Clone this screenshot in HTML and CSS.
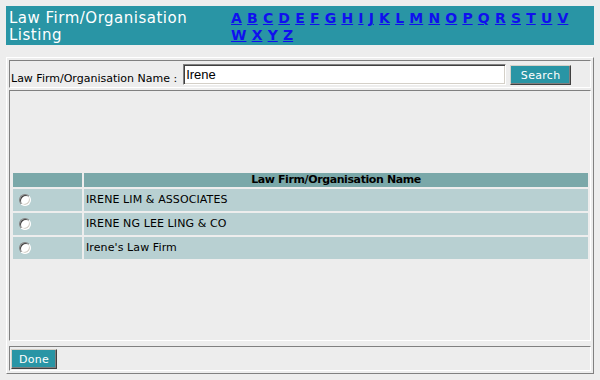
FILE: index.html
```html
<!DOCTYPE html>
<html>
<head>
<meta charset="utf-8">
<title>Law Firm/Organisation Listing</title>
<link rel="stylesheet" href="styles.css">
</head>
<body>
<div class="header">
  <div class="title">Law Firm/Organisation Listing</div>
  <div class="letters">
    <a href="#">A</a> <a href="#">B</a> <a href="#">C</a> <a href="#">D</a> <a href="#">E</a> <a href="#">F</a> <a href="#">G</a> <a href="#">H</a> <a href="#">I</a> <a href="#">J</a> <a href="#">K</a> <a href="#">L</a> <a href="#">M</a> <a href="#">N</a> <a href="#">O</a> <a href="#">P</a> <a href="#">Q</a> <a href="#">R</a> <a href="#">S</a> <a href="#">T</a> <a href="#">U</a> <a href="#">V</a><br><a href="#">W</a> <a href="#">X</a> <a href="#">Y</a> <a href="#">Z</a>
  </div>
</div>

<div class="frame">
  <div class="cell search-cell">
    <label class="label" for="name">Law Firm/Organisation Name :</label>
    <input class="text-input" id="name" type="text" value="Irene">
    <button class="btn search-btn" type="button">Search</button>
  </div>

  <div class="cell result-cell">
    <div class="grid">
      <div class="th"></div>
      <div class="th">Law Firm/Organisation Name</div>

      <div class="td radio-td"><input class="radio" type="radio" name="firm"></div>
      <div class="td">IRENE LIM &amp; ASSOCIATES</div>

      <div class="td radio-td"><input class="radio" type="radio" name="firm"></div>
      <div class="td">IRENE NG LEE LING &amp; CO</div>

      <div class="td radio-td"><input class="radio" type="radio" name="firm"></div>
      <div class="td">Irene's Law Firm</div>
    </div>
  </div>

  <div class="cell footer-cell">
    <button class="btn done-btn" type="button">Done</button>
  </div>
</div>
</body>
</html>
```

FILE: styles.css
```css
html, body {
  margin: 0;
  padding: 0;
}
body {
  background: #ededed;
  margin: 6px;
  font-family: "DejaVu Sans", Verdana, sans-serif;
  font-size: 11px;
  color: #000;
}

.header {
  display: flex;
  background: #2995a5;
  height: 39px;
  box-sizing: border-box;
  padding: 4px 0 1px 0;
}
.title {
  width: 219px;
  padding-left: 3px;
  box-sizing: border-box;
  color: #fff;
  font-size: 15px;
  line-height: 17px;
  letter-spacing: 0.5px;
}
.letters {
  padding-left: 6px;
  font-size: 14px;
  line-height: 17px;
  font-weight: bold;
  word-spacing: 0.3px;
}
.letters a {
  color: #1010ee;
  text-decoration: underline;
}

.frame {
  margin-top: 12px;
  border: 1px solid;
  border-color: #fff #808080 #808080 #fff;
  padding: 2px;
  display: flex;
  flex-direction: column;
}
.cell {
  border: 1px solid;
  border-color: #808080 #fff #fff #808080;
  box-sizing: border-box;
}

.search-cell {
  display: flex;
  height: 28px;
  padding: 3px 0 0 1px;
  align-items: flex-start;
}
.label {
  align-self: flex-end;
  line-height: 13px;
  margin-bottom: 2px;
  margin-right: 6px;
}
.text-input {
  width: 323px;
  height: 21px;
  box-sizing: border-box;
  margin: 0;
  padding: 0 0 0 2px;
  border: 1px solid;
  border-color: #808080 #fff #fff #808080;
  box-shadow: inset 1px 1px 0 #404040, inset -1px -1px 0 #d4d0c8;
  background: #fff;
  font-family: "Liberation Sans", Arial, sans-serif;
  font-size: 13px;
  color: #000;
  outline: none;
}
.btn {
  background: #2995a5;
  color: #fff;
  font-family: "DejaVu Sans", Verdana, sans-serif;
  font-size: 11px;
  height: 20px;
  box-sizing: border-box;
  margin: 0;
  padding: 0;
  border: 1px solid;
  border-color: #d4d0c8 #404040 #404040 #d4d0c8;
  box-shadow: inset -1px -1px 0 #808080;
  letter-spacing: 0.3px;
}
.search-btn {
  width: 61px;
  margin-left: 4px;
  margin-top: 1px;
}

.result-cell {
  margin-top: 2px;
  height: 251px;
  display: flex;
  align-items: center;
  padding-left: 3px;
}
.grid {
  display: grid;
  grid-template-columns: 69px 504px;
  grid-template-rows: 14px 22px 22px 22px;
  gap: 2px;
}
.th {
  background: #7aa8a9;
  font-weight: bold;
  text-align: center;
  line-height: 14px;
  letter-spacing: -0.4px;
}
.td {
  background: #b8d0d2;
  display: flex;
  align-items: center;
  padding-left: 2px;
  letter-spacing: 0.1px;
}
.radio-td {
  padding-left: 6px;
}
.radio {
  appearance: none;
  -webkit-appearance: none;
  width: 12px;
  height: 12px;
  margin: 0;
  border-radius: 50%;
  border: 1px solid;
  border-color: #808080 #fff #fff #808080;
  box-sizing: border-box;
  background: #fff;
  box-shadow: inset 1px 1px 0 #404040, inset -1px -1px 0 #d4d0c8;
}

.footer-cell {
  margin-top: 5px;
  height: 25px;
  padding: 2px 0 0 1px;
}
.done-btn {
  width: 46px;
}
```
